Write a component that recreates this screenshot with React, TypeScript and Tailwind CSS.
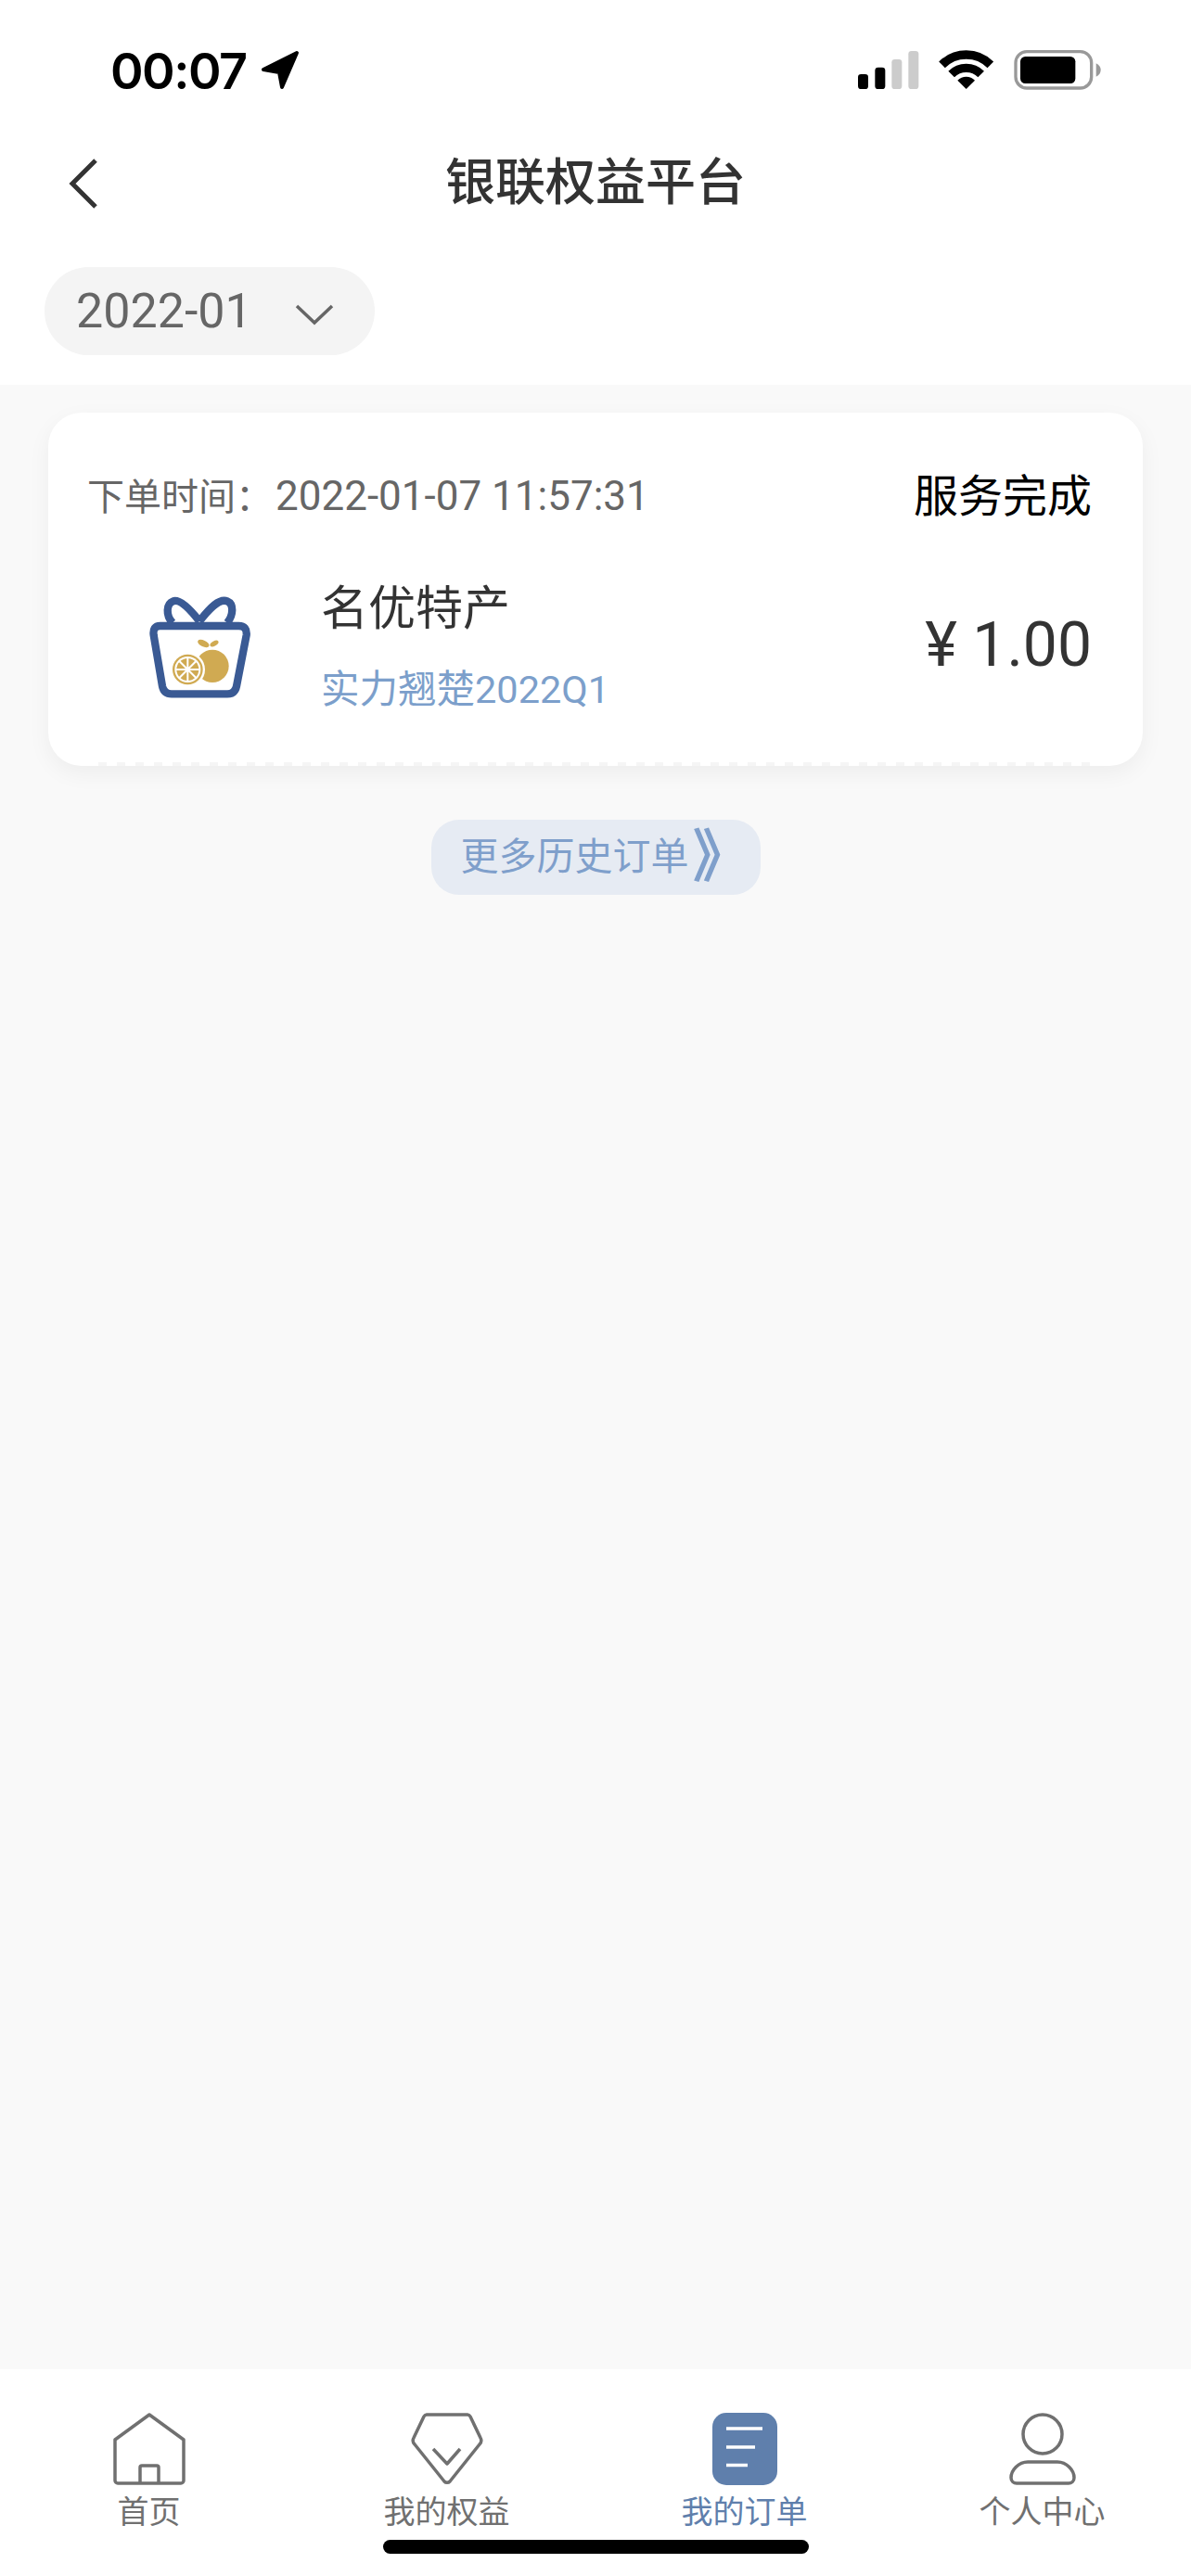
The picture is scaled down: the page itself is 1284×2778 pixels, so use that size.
const TABS = [
  { label: "首页", active: false },
  { label: "我的权益", active: false },
  { label: "我的订单", active: true },
  { label: "个人中心", active: false },
];

function StatusIcons() {
  return (
    <svg width="300" height="70" viewBox="0 0 900 210" className="shrink-0">
      <rect x="75" y="120" width="33" height="48" rx="10" fill="#000" />
      <rect x="130" y="98" width="33" height="70" rx="10" fill="#000" />
      <rect x="184" y="72" width="33" height="96" rx="10" fill="#ccc" />
      <rect x="238" y="45" width="33" height="123" rx="10" fill="#ccc" />
      <path d="M346.5 89.5A111 111 0 0 1 503.5 89.5" fill="none" stroke="#000" strokeWidth="28" />
      <path d="M377 120A68 68 0 0 1 473 120" fill="none" stroke="#000" strokeWidth="28" />
      <path d="M425 168L397 140A40 40 0 0 1 453 140Z" fill="#000" />
      <rect x="585" y="47" width="245" height="118" rx="36" fill="none" stroke="#999" strokeWidth="10" />
      <rect x="600" y="63" width="178" height="87" rx="16" fill="#000" />
      <path d="M845 85C856 90 860 98 860 106C860 115 856 123 845 128Z" fill="#999" />
    </svg>
  );
}

function GiftIcon() {
  return (
    <svg width="170" height="150" viewBox="0 0 510 450" className="shrink-0">
      <path
        d="M128 165H382Q410 165 407 195L375 360Q370 385 345 385H165Q140 385 135 360L107 195Q103 165 128 165Z"
        fill="none"
        stroke="#3a5a94"
        strokeWidth="25"
      />
      <path
        d="M255 150C220 105 190 78 170 85C148 93 145 130 168 155M255 150C290 105 320 75 345 85C367 94 365 130 345 155"
        fill="none"
        stroke="#3a5a94"
        strokeWidth="25"
      />
      <ellipse cx="268" cy="222" rx="20" ry="10" fill="#d0aa52" transform="rotate(25 268 222)" />
      <ellipse cx="303" cy="222" rx="15" ry="8" fill="#d0aa52" transform="rotate(-30 303 222)" />
      <circle cx="297" cy="295" r="53" fill="#d0aa52" />
      <circle cx="217" cy="306" r="56" fill="#fff" />
      <circle cx="217" cy="306" r="49" fill="#d0aa52" />
      <circle cx="217" cy="306" r="42" fill="#fff" />
      <circle cx="217" cy="306" r="36" fill="#d0aa52" />
      <path
        d="M217 268V344M179 306H255M190 279L244 333M244 279L190 333"
        stroke="#fff"
        strokeWidth="6"
      />
    </svg>
  );
}

function TabIcon({ index }: { index: number }) {
  if (index === 0) {
    return (
      <svg width="78" height="78" viewBox="0 0 78 78" fill="none" stroke="#707070" strokeWidth="3.5" strokeLinejoin="round">
        <path d="M2 29L39 2L76 29V73a3 3 0 0 1-3 3H5a3 3 0 0 1-3-3Z" />
        <path d="M29 76V59a2 2 0 0 1 2-2H47a2 2 0 0 1 2 2V76" />
      </svg>
    );
  }
  if (index === 1) {
    return (
      <svg width="78" height="78" viewBox="0 0 78 78" fill="none" stroke="#707070" strokeWidth="3.5" strokeLinejoin="round">
        <path d="M17 2H61a4 4 0 0 1 3 2L75 27a6 6 0 0 1-1 7L42 74a4 4 0 0 1-6 0L4 34a6 6 0 0 1-1-7L14 4a4 4 0 0 1 3-2Z" />
        <path d="M24 39L39 55L53 39" />
      </svg>
    );
  }
  if (index === 2) {
    return (
      <svg width="70" height="78" viewBox="0 0 70 78" fill="none">
        <rect width="70" height="78" rx="15" fill="#5f7fac" />
        <path d="M15 17H54M15 37H46M15 56.500H38" stroke="#fff" strokeWidth="3.500" />
      </svg>
    );
  }
  return (
    <svg width="72" height="78" viewBox="0 0 72 78" fill="none" stroke="#707070" strokeWidth="3.5">
      <circle cx="36" cy="23" r="21" />
      <path d="M20 53H52C62 53 70 62 70 70C70 74 67 76 64 76H8C5 76 2 74 2 70C2 62 10 53 20 53Z" />
    </svg>
  );
}

export default function App() {
  return (
    <div className="flex h-[2778px] w-[1284px] flex-col bg-[#f9f9f9] font-['Roboto','Noto_Sans_CJK_SC',sans-serif]">
      <header className="flex h-[415px] shrink-0 flex-col bg-white">
        <div className="flex h-[163px] shrink-0 items-start justify-between pl-[119px] pr-[84px] pt-[40px]">
          <div className="flex items-center gap-[14px]">
            <span className="mt-[2px] font-['Inter'] text-[54px] leading-[70px] font-semibold tracking-[-1.5px] text-black">
              00:07
            </span>
            <svg width="44" height="44" viewBox="0 0 44 44">
              <path d="M40 3L4 21L21 24L24 40Z" fill="#000" stroke="#000" strokeWidth="4" strokeLinejoin="round" />
            </svg>
          </div>
          <StatusIcons />
        </div>
        <div className="relative flex h-[70px] shrink-0 items-center justify-center">
          <svg width="34" height="56" viewBox="0 0 34 56" fill="none" stroke="#333" strokeWidth="5" className="absolute left-[73px] top-[7px]">
            <path d="M30 3L5 28L30 53" />
          </svg>
          <h1 className="text-[54px] leading-[70px] font-medium text-[#333]">银联权益平台</h1>
        </div>
        <div className="px-[48px] pt-[55px]">
          <div className="flex h-[95px] w-[356px] items-center rounded-full bg-[#f4f4f4] pl-[34px]">
            <span className="text-[52px] font-normal text-[#666]">2022-01</span>
            <svg width="44" height="24" viewBox="0 0 44 24" fill="none" stroke="#666" strokeWidth="3.5" className="ml-[45px] mt-[6px]">
              <path d="M3 3L22 21L41 3" />
            </svg>
          </div>
        </div>
      </header>

      <main className="flex flex-1 flex-col items-center px-[52px] pt-[30px]">
        <section className="relative flex h-[381px] w-full flex-col rounded-[36px] bg-white pl-[42px] pr-[55px] shadow-[0_8px_24px_rgba(0,0,0,0.05)]">
          <div className="mt-[60px] flex h-[60px] items-center justify-between">
            <span className="text-[40px] text-[#666]">
              下单时间{"\uFF1A"}
              <span className="ml-[3px] text-[44px]">2022-01-07 11:57:31</span>
            </span>
            <span className="mt-[2px] text-[48px] text-black">服务完成</span>
          </div>
          <div className="mt-[28px] flex items-start">
            <div className="ml-[36px] mt-[27px]">
              <GiftIcon />
            </div>
            <div className="ml-[46px] mt-[29px] flex flex-col">
              <span className="text-[51px] leading-[70px] text-[#333]">名优特产</span>
              <span className="mt-[22px] text-[41.5px] leading-[60px] text-[#7c9fcb]">实力翘楚2022Q1</span>
            </div>
            <span className="ml-auto mt-[63px] text-[66px] leading-[80px] text-[#333]">¥ 1.00</span>
          </div>
          <div className="absolute bottom-0 left-[54px] right-[54px] h-[4px] bg-[repeating-linear-gradient(90deg,#f5f5f5_0,#f5f5f5_9px,transparent_9px,transparent_20px)]" />
        </section>
        <button className="mt-[58px] flex h-[81px] w-[355px] items-center rounded-[30px] bg-[#e6ebf3] pl-[32px] text-[41px] leading-none text-[#7f9fcb]">
          更多历史订单<span className="ml-[4px] text-[62px] leading-none font-semibold">》</span>
        </button>
      </main>

      <footer className="relative h-[223px] shrink-0 bg-white">
        <nav className="grid grid-cols-4 pt-[47px]">
          {TABS.map((tab, i) => (
            <div key={tab.label} className="flex flex-col items-center">
              <TabIcon index={i} />
              <span className={`mt-[6px] text-[34px] leading-[46px] ${tab.active ? "text-[#5f7fac]" : "text-[#707070]"}`}>
                {tab.label}
              </span>
            </div>
          ))}
        </nav>
        <div className="absolute bottom-[24px] left-[413px] h-[15px] w-[459px] rounded-full bg-black" />
      </footer>
    </div>
  );
}
